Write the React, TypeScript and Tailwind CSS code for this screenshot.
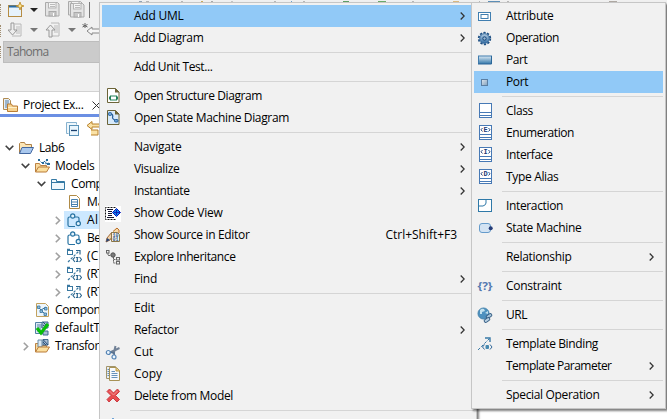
import React from "react";

const FONT = '"Open Sans", "Noto Sans", sans-serif';
let ctx: CanvasRenderingContext2D | null = null;

function spacingFor(text: string, width: number) {
  if (!ctx) ctx = document.createElement("canvas").getContext("2d");
  if (!ctx) return 0;
  ctx.font = `12px ${FONT}`;
  return (width + 0.5 - ctx.measureText(text).width) / text.length;
}

function Label({ text, w, className = "" }: { text: string; w: number; className?: string }) {
  return (
    <span
      className={`block whitespace-pre font-['Open_Sans','Noto_Sans',sans-serif] text-[12px] leading-[18px] ${className}`}
      style={{ letterSpacing: spacingFor(text, w) }}
    >
      {text}
    </span>
  );
}

function Svg({ children, w = 16, h = 16, className = "" }: { children: React.ReactNode; w?: number; h?: number; className?: string }) {
  return (
    <svg width={w} height={h} viewBox={`0 0 ${w} ${h}`} fill="none" className={`block shrink-0 ${className}`}>
      {children}
    </svg>
  );
}

const Classifier = ({ letter }: { letter: string }) => (
  <Svg>
    <rect x="2.5" y=".5" width="12" height="14" fill="#fff" stroke="#4779b5" />
    <path d="M2 9.500h13M2 12.500h13" stroke="#4779b5" />
    {letter && (
      <>
        <path d="M5.500 3 4 4.800 5.500 6.500M11.500 3 13 4.800 11.500 6.500" stroke="#2c4a83" />
        <text x="8.5" y="7.3" textAnchor="middle" fontSize="7" fontWeight="700" fill="#223c78" fontFamily="Liberation Mono">{letter}</text>
      </>
    )}
  </Svg>
);

const Floppy = ({ x = 0, y = 0 }: { x?: number; y?: number }) => (
  <g transform={`translate(${x} ${y})`}>
    <path d="M.5.5h12l1.500 1.500v12H.5z" fill="#e4e4e4" stroke="#aaa" />
    <rect x="3.500" y=".5" width="7.500" height="5.500" fill="#f4f4f4" stroke="#b5b5b5" />
    <path d="M5 2.500h5M5 4.500h5" stroke="#bbb" />
    <rect x="4" y="9.500" width="7" height="4.500" fill="#c8c8c8" stroke="#aaa" />
    <path d="M8.500 11v3" stroke="#fff" />
  </g>
);

const icons: Record<string, React.ReactNode> = {
  structure: (
    <Svg>
      <path d="M2.500.5h8l3.500 3.500v10.500H2.500z" fill="#fff" stroke="#6c6438" />
      <path d="M10 0v4.500h4.500z" fill="#6c6438" />
      <rect x="5.500" y="8" width="6" height="4" stroke="#25815a" />
      <path d="M4 8.500h2v3H4zM11 8.500h2v3h-2z" fill="#25815a" />
    </Svg>
  ),
  state: (
    <Svg>
      <path d="M2.500.5h8l3.500 3.500v10.500H2.500z" fill="#d8eafa" stroke="#6c6438" />
      <path d="M10 0v4.500h4.500z" fill="#6c6438" />
      <path d="M5 4.500C8 3 8 6 7.500 7.500S10 10 11 11" stroke="#28609b" strokeWidth="1.300" />
      <rect x="3.500" y="2.500" width="3" height="3" rx="1" fill="#6aa4d8" stroke="#28609b" />
      <rect x="9.500" y="9.500" width="3.500" height="2.500" rx="1" fill="#6aa4d8" stroke="#28609b" />
    </Svg>
  ),
  code: (
    <Svg className="mt-px">
      <path d="M0 0h16v16H0z" fill="#fff" />
      <path d="M10.500 1.500h-10v12h10" stroke="#111" strokeDasharray="2 1" />
      <path d="M2 3.500h6M3 5.500h4M3 7.500h4M3 9.500h4M2 11.500h7" stroke="#15152d" />
      <path d="m11.500 2.500 4 4-4 4-4-4z" fill="#118bed" stroke="#0b13b8" />
      <path d="M9 6.500h6M11.500 4v5" stroke="#141fb5" />
    </Svg>
  ),
  source: (
    <Svg>
      <path d="M8 4.500 12 1l2 2v3" fill="#f6d9a9" stroke="#bb6d23" />
      <path d="M7 5 2 11l-1 4 4-2 3-5z" fill="#ecd0a9" stroke="#a66b36" />
      <path d="m1 15 1-4 3 2z" fill="#26457b" />
      <path d="M6.500 5.500h6l2 2v7h-8z" fill="#f7f5ec" stroke="#8b7748" />
      <text x="10.500" y="10" textAnchor="middle" fontSize="5" fontWeight="700" fill="#35588b" fontFamily="Liberation Mono">10</text>
      <text x="10.500" y="14" textAnchor="middle" fontSize="5" fontWeight="700" fill="#35588b" fontFamily="Liberation Mono">01</text>
    </Svg>
  ),
  inherit: (
    <Svg>
      <path d="M3 4v2.500h5M8.500 8v6H12M8.500 10.500H12" stroke="#666" strokeDasharray="2 .7" />
      <rect x="1.500" y="1.500" width="2.500" height="2.500" stroke="#666" />
      <circle cx="8" cy="6" r="2.200" fill="#7b7b7b" stroke="#555" />
      <rect x="11.500" y="8.500" width="3" height="2.500" stroke="#666" />
      <rect x="11.500" y="12.500" width="3" height="2.500" stroke="#666" />
    </Svg>
  ),
  cut: (
    <Svg>
      <path d="M5 8.500 14.500 4M8.500 10.500 10.500 2" stroke="#718196" strokeWidth="2" />
      <path d="m5 8 4 1 .5 2" stroke="#56718f" strokeWidth="1.500" />
      <circle cx="3.300" cy="8.500" r="2" fill="#edf6fd" stroke="#5685b5" strokeWidth="1.200" />
      <circle cx="9" cy="13" r="2" fill="#edf6fd" stroke="#5685b5" strokeWidth="1.200" />
    </Svg>
  ),
  copy: (
    <Svg>
      <path d="M1.500.5h9v12h-9z" fill="#e9eef4" stroke="#a2946a" />
      <path d="M2.500 3.500h3M2.500 5.500h3M2.500 7.500h3M2.500 9.500h3" stroke="#638fb7" />
      <path d="M4.500 1.500h7l3 3v10h-10z" fill="#f7fafd" stroke="#a79256" />
      <path d="M11 1.500v3.500h3.500" fill="#e6cb7e" stroke="#b89648" />
      <path d="M6.500 5.500H10M6.500 7.500h6M6.500 9.500h6M6.500 11.500h6" stroke="#6692bc" />
    </Svg>
  ),
  del: (
    <Svg>
      <path d="m2 3.500 2.500-2.500 4 4 4-4 2 2.500-4 4 4 4-2.500 2.500-4-4-4 4L2 11.500l4-4z" fill="#e74c50" stroke="#cb3c42" strokeLinejoin="round" />
      <path d="m4.500 3 4 4 4-4" stroke="#f19291" />
    </Svg>
  ),
  attr: (
    <Svg>
      <rect x="1.500" y="4.500" width="12" height="8" fill="#fff" stroke="#407eb0" />
      <rect x="4" y="6.500" width="7" height="4" fill="#fff" stroke="#407eb0" />
    </Svg>
  ),
  op: (
    <Svg>
      <circle cx="7.500" cy="8.500" r="5.800" stroke="#1e4f83" strokeWidth="1.800" strokeDasharray="2.250 1.400" />
      <circle cx="7.500" cy="8.500" r="4.800" fill="url(#gear)" stroke="#31679b" />
      <circle cx="7.500" cy="8.500" r="1.700" fill="#9dbad4" stroke="#154579" />
      <defs><linearGradient id="gear" x2="0" y2="1"><stop stopColor="#b2cce3" /><stop offset="1" stopColor="#376ea3" /></linearGradient></defs>
    </Svg>
  ),
  part: (
    <Svg>
      <defs><linearGradient id="partFill" x2="0" y2="1"><stop stopColor="#dceaf4" /><stop offset="1" stopColor="#3b7dad" /></linearGradient></defs>
      <rect x="1.500" y="4" width="13" height="7.500" fill="url(#partFill)" stroke="#407cae" />
      <path d="M14.500 4v8H1" stroke="#2a6799" />
    </Svg>
  ),
  port: (
    <Svg>
      <defs><linearGradient id="portFill" x2="1" y2="1"><stop stopColor="#e0e8f0" /><stop offset="1" stopColor="#7f9fbb" /></linearGradient></defs>
      <rect x="4.500" y="5.500" width="6" height="6" fill="url(#portFill)" stroke="#5b7fa3" />
    </Svg>
  ),
  cls: <Classifier letter="" />,
  enumeration: <Classifier letter="E" />,
  iface: <Classifier letter="I" />,
  alias: <Classifier letter="D" />,
  interaction: (
    <Svg>
      <rect x="1.500" y="1.500" width="13" height="12" fill="#fff" stroke="#2f79a8" />
      <path d="M2 8h4q3-1 3-3V2" stroke="#2f79a8" />
    </Svg>
  ),
  machine: (
    <Svg>
      <rect x="2.500" y="3.500" width="11" height="9" rx="2.500" fill="#d3e3f3" stroke="#659bcb" />
      <circle cx="13.700" cy="8.300" r="2" fill="#263d78" />
    </Svg>
  ),
  constraint: (
    <Svg>
      <text x="8" y="12" textAnchor="middle" fontSize="11" fontWeight="700" fill="#5378b0" fontFamily="Open Sans" textLength="15" lengthAdjust="spacingAndGlyphs">{"{?}"}</text>
    </Svg>
  ),
  url: (
    <Svg>
      <circle cx="6.500" cy="6.500" r="5.500" fill="#4e91bf" stroke="#4684ad" />
      <path d="M3 3q2-2 4-1l1 2-3 1v2H3zM8 6l3-2v3z" fill="#c4e2ef" />
      <rect x="9" y="7.500" width="6" height="3" rx="1.500" transform="rotate(-35 12 9)" fill="#a9c5da" stroke="#386187" />
      <rect x="7" y="11.500" width="6" height="3" rx="1.500" transform="rotate(-35 10 13)" fill="#bad2e4" stroke="#386187" />
    </Svg>
  ),
  binding: (
    <Svg>
      <path d="M1 14 12 3" stroke="#397aa7" strokeDasharray="3 1.500" />
      <path d="M8 2h5v4" stroke="#397aa7" strokeWidth="1.400" />
      <path d="m7.500 8.500-2 2.500 2 2.500M13 8.500l2 2.500-2 2.500" stroke="#33699a" />
      <rect x="8.500" y="9" width="3.500" height="4" rx="1" fill="#4588af" />
    </Svg>
  ),
  open: (
    <Svg>
      <path d="M1.500 13.500v-10l1-1h4l1 2h6v3" fill="#fbe5b5" stroke="#ae8147" />
      <path d="M1.500 13.500 4 7.500h11.500l-3 6z" fill="#a9c8ee" stroke="#4267a0" />
    </Svg>
  ),
  models: (
    <Svg>
      <path d="M1.500 14V5.500h4l1 2h6v2" fill="#f8dba0" stroke="#bc8243" />
      <path d="m1.500 14 3-5h11l-3 5z" fill="#fbdf9e" stroke="#b97a38" />
      <path d="m5 2 3 3 5-3-2 4 4-1" stroke="#286b9b" strokeDasharray="2 1" />
      <path d="M4 1h2v2H4zM8 4h2v2H8zM12 1h2v2h-2zM13 5h3v2h-3z" fill="#286b9b" />
    </Svg>
  ),
  folder: (
    <Svg>
      <path d="M1.500 13.500v-10h5v2h8v8z" fill="#edf7fd" stroke="#3479a4" />
      <path d="M2 6.500h12" stroke="#3479a4" />
    </Svg>
  ),
  file: (
    <Svg>
      <path d="M3.500 1.500h7l3 3v10h-10z" fill="#fff" stroke="#b08b46" />
      <path d="M5.500 5.500h6v7h-6zM6 8h5M6 10.500h5" stroke="#4680ad" />
    </Svg>
  ),
  capsule: (
    <Svg>
      <path d="M4.500 5H3.500Q2 5 2 6.500v6.500q0 1.500 1.500 1.500H9M9 5h2.500q1.500 0 1.500 1.500V9" stroke="#2873a2" strokeWidth="1.200" />
      <circle cx="6.700" cy="4" r="2.100" fill="#e3f3fd" stroke="#2873a2" strokeWidth="1.200" />
      <circle cx="12.300" cy="11.500" r="2.100" fill="#e3f3fd" stroke="#2873a2" strokeWidth="1.200" />
    </Svg>
  ),
  relation: (
    <Svg>
      <rect x="1.500" y="2.500" width="5" height="4" stroke="#3978a1" />
      <path d="M1 1.500h3" stroke="#3978a1" strokeWidth="1.500" />
      <path d="m2 14 11-11" stroke="#3978a1" strokeWidth="1.200" strokeDasharray="2.500 1.500" />
      <path d="M10 2.500h4v4M9 9l-2 2.500L9 14M13.500 9l2 2.500-2 2.500M10 9.500h2.500M11.300 9.500v4M10 13.500h2.500" stroke="#2c668f" strokeWidth="1.200" />
    </Svg>
  ),
  modelFile: (
    <Svg>
      <path d="M2.500 1.500h9l3 3v10h-12z" fill="#edf6fc" stroke="#c3a25e" />
      <path d="m4 5 3 3 5-3M7 8l4 4" stroke="#38749e" />
      <path d="M3.500 4h2.500v2.500H3.500zM6 8h2.500v2.500H6zM10.500 5.500h2.500v2.500h-2.500zM10 11h2.500v2.500h-2.500z" fill="#8fbfdd" stroke="#38749e" strokeWidth=".8" />
    </Svg>
  ),
  test: (
    <Svg>
      <path d="M1.500 2.500h8v11h-8z" fill="#dceaf4" stroke="#5380a5" />
      <path d="M3 5h5M3 7h5M3 9h4M3 11h4" stroke="#5380a5" />
      <path d="M8 2h6v6H8zM9 11h5v4H9z" fill="#a8bed3" stroke="#416b91" />
      <path d="m9 2 5 5M9 5l4 3" stroke="#294e79" />
      <path d="m3 8 4 5 7-9" stroke="#08bf08" strokeWidth="3.200" />
    </Svg>
  ),
  transform: (
    <Svg>
      <path d="M1.500 14V5.500h4l1 2h6v2" fill="#f8dba0" stroke="#bc8243" />
      <path d="M4 2h4v7H4z" fill="#dceaf4" stroke="#688ba8" />
      <path d="M9 1.500h5v5.500H9z" fill="#a8bed3" stroke="#416b91" />
      <path d="m9 1.500 5 5.500M9 4l3 3" stroke="#294e79" />
      <path d="m1.500 14 3-5h11l-3 5z" fill="#fbdf9e" stroke="#b97a38" />
    </Svg>
  ),
  newWiz: (
    <Svg>
      <rect x=".5" y="3.500" width="13" height="11" fill="#e6f2fc" stroke="#b68c43" />
      <path d="M1 4.500h12" stroke="#286ba5" strokeWidth="2" />
      <path d="m12 0 1 3 3 1-3 1-1 3-1-3-3-1 3-1z" fill="#ffe691" stroke="#bc8a27" strokeWidth=".8" />
    </Svg>
  ),
};

const Down = ({ light = false }: { light?: boolean }) => (
  <Svg w={8} h={4}><path d="M0 0h8L4 4z" fill={light ? "#777" : "#222"} /></Svg>
);

type Entry = null | { t: string; w: number; i?: string; sub?: boolean; on?: boolean; key?: string };

const mainMenu: Entry[] = [
  { t: "Add UML", w: 49, sub: true, on: true },
  { t: "Add Diagram", w: 69, sub: true },
  null,
  { t: "Add Unit Test...", w: 78 },
  null,
  { t: "Open Structure Diagram", w: 127.5, i: "structure" },
  { t: "Open State Machine Diagram", w: 154.5, i: "state" },
  null,
  { t: "Navigate", w: 47, sub: true },
  { t: "Visualize", w: 45, sub: true },
  { t: "Instantiate", w: 55, sub: true },
  { t: "Show Code View", w: 88, i: "code" },
  { t: "Show Source in Editor", w: 115, i: "source", key: "Ctrl+Shift+F3" },
  { t: "Explore Inheritance", w: 101, i: "inherit" },
  { t: "Find", w: 22.5, sub: true },
  null,
  { t: "Edit", w: 20 },
  { t: "Refactor", w: 44, sub: true },
  { t: "Cut", w: 19, i: "cut" },
  { t: "Copy", w: 27.5, i: "copy" },
  { t: "Delete from Model", w: 98.5, i: "del" },
  null,
];

const umlMenu: Entry[] = [
  { t: "Attribute", w: 47, i: "attr" },
  { t: "Operation", w: 52.5, i: "op" },
  { t: "Part", w: 21, i: "part" },
  { t: "Port", w: 21.5, i: "port", on: true },
  null,
  { t: "Class", w: 26.5, i: "cls" },
  { t: "Enumeration", w: 67.5, i: "enumeration" },
  { t: "Interface", w: 46, i: "iface" },
  { t: "Type Alias", w: 52, i: "alias" },
  null,
  { t: "Interaction", w: 56.5, i: "interaction" },
  { t: "State Machine", w: 75, i: "machine" },
  null,
  { t: "Relationship", w: 65, sub: true },
  null,
  { t: "Constraint", w: 55, i: "constraint" },
  null,
  { t: "URL", w: 20.5, i: "url" },
  null,
  { t: "Template Binding", w: 91.5, i: "binding" },
  { t: "Template Parameter", w: 105, sub: true },
  null,
  { t: "Special Operation", w: 93, sub: true },
];

function Menu({ entries }: { entries: Entry[] }) {
  return (
    <>
      {entries.map((e, n) =>
        e === null ? (
          <div key={n} className="flex h-[7px] items-center pl-7">
            <div className="h-px w-full bg-[#d5d5d5]" />
          </div>
        ) : (
          <div key={n} className={`flex h-[22px] items-center pl-[3px] ${e.on ? "bg-[#91c9f7]" : ""}`}>
            <div className="w-[29px] shrink-0">{e.i && icons[e.i]}</div>
            <Label text={e.t} w={e.w} className="grow" />
            {e.key && <Label text={e.key} w={71} className="mr-[17px]" />}
            {e.sub && (
              <Svg w={5} h={8} className="mr-[9px]">
                <path d="m.7.5 3.500 3.500L.7 7.500" stroke="#333" strokeWidth="1.300" />
              </Svg>
            )}
          </div>
        )
      )}
    </>
  );
}

type Row = { t: string; w: number; i: string; pad: string; tw?: "open" | "closed"; on?: boolean };
const tree: Row[] = [
  { t: "Lab6", w: 25, i: "open", pad: "pl-[3px]", tw: "open" },
  { t: "Models", w: 39, i: "models", pad: "pl-[19px]", tw: "open" },
  { t: "Comp", w: 31, i: "folder", pad: "pl-[35px]", tw: "open" },
  { t: "Ma", w: 17, i: "file", pad: "pl-[51px]" },
  { t: "Al", w: 11, i: "capsule", pad: "pl-[51px]", tw: "closed", on: true },
  { t: "Be", w: 13, i: "capsule", pad: "pl-[51px]", tw: "closed" },
  { t: "(C", w: 11, i: "relation", pad: "pl-[51px]", tw: "closed" },
  { t: "(RT", w: 16, i: "relation", pad: "pl-[51px]", tw: "closed" },
  { t: "(RT", w: 16, i: "relation", pad: "pl-[51px]", tw: "closed" },
  { t: "Compon", w: 45, i: "modelFile", pad: "pl-[19px]" },
  { t: "defaultTC", w: 52, i: "test", pad: "pl-[19px]" },
  { t: "Transform", w: 54, i: "transform", pad: "pl-[19px]", tw: "closed" },
];

const toolbarEdge = [
  { gap: 139, w: 3, c: "bg-[#7e93a8]" },
  { gap: 4, w: 3, c: "bg-[#aaaaaa]" },
  { gap: 32, w: 2, c: "bg-[#aaaaaa]" },
  { gap: 18, w: 2, c: "bg-[#c09a3c]" },
  { gap: 8, w: 2, c: "bg-[#999999]" },
  { gap: 18, w: 2, c: "bg-[#bbbbbb]" },
  { gap: 41, w: 2, c: "bg-[#aaaaaa]" },
  { gap: 15, w: 1, c: "bg-[#4d8dc2]" },
  { gap: 11, w: 2, c: "bg-[#aaaaaa]" },
  { gap: 38, w: 6, c: "bg-[#3c8a43]" },
  { gap: 29, w: 8, c: "bg-[#4b9a4b]" },
  { gap: 26, w: 2, c: "bg-[#aaaaaa]" },
  { gap: 39, w: 6, c: "bg-[#d7ac65]" },
  { gap: 20, w: 1, c: "bg-[#aaaaaa]" },
  { gap: 8, w: 12, c: "bg-[#3978a9]" },
  { gap: 7, w: 2, c: "bg-[#aaaaaa]" },
  { gap: 100, w: 8, c: "bg-[#a09890]" },
];

export default function App() {
  return (
    <div className="relative h-[419px] w-[667px] overflow-hidden bg-[#f0f0f0] text-black">
      <div className="flex h-[419px] w-[99px] flex-col overflow-hidden">
        <div className="flex h-[18px] items-center pl-2 pt-px">
          {icons.newWiz}
          <div className="ml-[6px]"><Down /></div>
          <Svg className="ml-[7px]"><Floppy /></Svg>
          <Svg w={17} h={17} className="ml-[7px]"><Floppy /><g transform="translate(2 2)"><Floppy /></g></Svg>
          <div className="ml-[4px] h-[16px] w-px shrink-0 bg-[#777]" />
        </div>
        <div className="flex h-[23px] items-center pl-2">
          <Svg>
            <path d="M7 2h6v12H4" fill="#f1f1f1" stroke="#b8b8b8" />
            <path d="M8 5h4M8 7h4M8 9h4M8 11h4" stroke="#bbb" />
            <path d="M3 1h3v7h3l-4.500 5L0 8h3z" fill="#ededed" stroke="#999" />
          </Svg>
          <div className="ml-[6px]"><Down light /></div>
          <Svg className="ml-[7px]">
            <path d="M6 1h8v13H7" fill="#f1f1f1" stroke="#b8b8b8" />
            <path d="M9 4h4M9 6h4M9 8h4M9 10h4" stroke="#bbb" />
            <path d="M4 15v-7H1l4.500-5L10 8H7v7z" fill="#ededed" stroke="#999" />
          </Svg>
          <div className="ml-[7px]"><Down light /></div>
          <Svg w={24} h={16} className="ml-[6px]">
            <path d="m5 9 5-4v2h11v4H10v2z" fill="#f6f6f6" stroke="#888" />
            <path d="M3 1v5M.5 2.500l5 2.500M5.500 2.500.5 5" stroke="#666" />
          </Svg>
        </div>
        <div className="ml-[3px] flex h-[22px] items-center border border-r-0 border-[#bdbdbd] bg-[#cbcbcb] pl-[3px] text-[#6d6d6d]">
          <Label text="Tahoma" w={41} />
        </div>
        <div className="mt-[28px] flex h-[23px] items-center border-t border-[#d2d2d2] bg-white pl-[2px] pt-1">
          <Svg>
            <path d="M1.500 1.500h5l2 2v9h-7z" fill="#e6eef5" stroke="#b18b50" />
            <path d="M3 4h4M3 6h4M3 8h3M3 10h3" stroke="#537ea5" />
            <path d="M5.500 14.500V7h4l1 2h5v5.500z" fill="#f6d390" stroke="#bb7d34" />
            <path d="M6 10.500h9" stroke="#fff0c8" />
          </Svg>
          <Label text="Project Ex..." w={60} className="ml-[5px]" />
          <Svg w={9} h={9} className="ml-[8px]"><path d="m.5.5 8 8M8.500.5l-8 8" stroke="#333" /></Svg>
        </div>
        <div className="h-[3px] shrink-0 bg-[#6b8fe3]" />
        <div className="flex h-[22px] items-center bg-white pl-[65px] pt-px">
          <Svg>
            <path d="M3.500 12.500h-2v-11h10v2" fill="#eef7fc" stroke="#87b2cf" />
            <rect x="4.500" y="4.500" width="9" height="10" fill="#eaf6fd" stroke="#5992b8" />
            <path d="M6 9.500h6" stroke="#183e6d" strokeWidth="1.300" />
          </Svg>
          <Svg className="ml-[5px]">
            <path d="M14 3H6V.5L1 4.500l5 4V6h8z" fill="#fae2a6" stroke="#b8802a" />
            <path d="M5 9h7v5H5" fill="#fae2a6" stroke="#b8802a" />
          </Svg>
        </div>
        <div className="flex grow flex-col bg-white">
          {tree.map((r, n) => (
            <div key={n} className={`flex h-[18px] items-center ${r.pad}`}>
              <div className="flex w-[13px] shrink-0 justify-center">
                {r.tw === "open" && <Svg w={9} h={6}><path d="m.7.8 3.800 3.800L8.300.8" stroke="#404040" strokeWidth="1.600" /></Svg>}
                {r.tw === "closed" && <Svg w={6} h={9}><path d="m.8.7 3.800 3.800L.8 8.300" stroke="#a0a0a0" strokeWidth="1.600" /></Svg>}
              </div>
              <div className={`flex h-[18px] grow items-center pl-[2px] ${r.on ? "bg-[#cce8ff]" : ""}`}>
                {icons[r.i]}
                <Label text={r.t} w={r.w} className="ml-[5px]" />
              </div>
            </div>
          ))}
        </div>
      </div>

      <div className="absolute left-0 top-0 flex h-[62px] w-px flex-col justify-between py-1">
        <div className="h-3 border-l border-dotted border-[#a08d70]" />
        <div className="h-3 border-l border-dotted border-[#a08d70]" />
        <div className="h-3 border-l border-dotted border-[#a08d70]" />
      </div>

      <div className="absolute left-0 top-0 flex h-[2px] w-[667px] items-end opacity-80">
        {toolbarEdge.map((s, n) => (
          <div key={n} className={`h-px shrink-0 ${s.c}`} style={{ marginLeft: s.gap, width: s.w }} />
        ))}
      </div>

      <div className="absolute left-[477px] top-[409px] h-[10px] w-[190px] bg-white" />
      <div className="absolute left-[99px] top-[2px] h-[440px] w-[378px] border border-[#c6c6c6] bg-[#f1f1f1] p-[2px] shadow-[2px_2px_2px_rgba(0,0,0,0.5)]">
        <Menu entries={mainMenu} />
        <div className="pl-[3px] pt-px"><Svg><path d="M8 3v12M4 8l4-4 4 4" stroke="#438bd0" strokeWidth="1.500" /></Svg></div>
      </div>

      <div className="absolute left-[471px] top-[2px] h-[407px] w-[195px] border border-[#c6c6c6] bg-[#f1f1f1] p-[2px] shadow-[2px_2px_2px_rgba(0,0,0,0.5)]">
        <Menu entries={umlMenu} />
      </div>
    </div>
  );
}
